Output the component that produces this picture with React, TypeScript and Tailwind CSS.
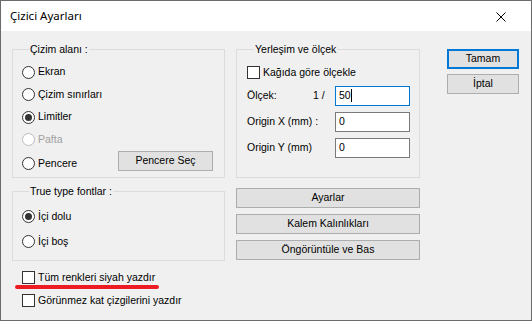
import React from "react";

// ---------------------------------------------------------------------------
// Small Win32-style controls
// ---------------------------------------------------------------------------

function Radio({ label, checked, disabled }: { label: string; checked?: boolean; disabled?: boolean }) {
  return (
    <div className="flex items-center h-[22.5px]">
      <span
        className={`w-[13px] h-[13px] rounded-full border bg-white flex items-center justify-center shrink-0 ${
          disabled ? "border-[#bcbcbc]" : "border-[#333333]"
        }`}
      >
        {checked && <span className="w-[7px] h-[7px] rounded-full bg-[#333333]" />}
      </span>
      <span className={`ml-[3px] ${disabled ? "text-[#a0a0a0]" : "text-black"}`}>{label}</span>
    </div>
  );
}

function Check({ label }: { label: string }) {
  return (
    <div className="flex items-center">
      <span className="w-[13px] h-[13px] border border-[#333333] bg-white shrink-0" />
      <span className="ml-[3px]">{label}</span>
    </div>
  );
}

function Button({ label, primary, className = "" }: { label: string; primary?: boolean; className?: string }) {
  return (
    <div
      className={`h-[20px] bg-[#e1e1e1] flex items-center justify-center ${
        primary ? "border-2 border-[#0078d7]" : "border border-[#adadad]"
      } ${className}`}
    >
      {label}
    </div>
  );
}

function Field({ value, focused }: { value: string; focused?: boolean }) {
  return (
    <div
      className={`w-[75px] h-[20px] bg-white border flex items-center pl-[3px] ${
        focused ? "border-[#0078d7]" : "border-[#7a7a7a]"
      }`}
    >
      {value}
      {focused && <span className="w-[1px] h-[13px] bg-black" />}
    </div>
  );
}

function Group({ title, className = "", children }: { title: string; className?: string; children: React.ReactNode }) {
  return (
    <fieldset className={`border border-[#dcdcdc] ${className}`}>
      <legend className="ml-[7px] px-[1px] leading-[12px]">{title}</legend>
      {children}
    </fieldset>
  );
}

// ---------------------------------------------------------------------------
// Dialog
// ---------------------------------------------------------------------------

export default function App() {
  return (
    <div className="w-[532px] h-[321px] border border-[#6b6b6b] bg-[#f0f0f0] flex flex-col font-['Liberation_Sans',Arial,sans-serif] text-[10.5px] text-black">
      {/* Title bar */}
      <div className="h-[30px] bg-white flex items-center justify-between pl-[9px] pr-[25px] shrink-0">
        <span className="font-['Noto_Sans',sans-serif] text-[11.5px]">Çizici Ayarları</span>
        <svg width="10" height="10" viewBox="0 0 10 10" className="mt-[2px]">
          <path d="M0.5 0.5L9.5 9.5M9.5 0.5L0.5 9.5" stroke="#000" strokeWidth="1" fill="none" />
        </svg>
      </div>

      {/* Body */}
      <div className="flex pl-[11px] pt-[12px]">
        {/* Left column */}
        <div className="w-[213px] flex flex-col">
          <Group title="Çizim alanı :" className="h-[135px] pl-[9px] pr-[11px] pt-[6px]">
            <Radio label="Ekran" />
            <Radio label="Çizim sınırları" />
            <Radio label="Limitler" checked />
            <Radio label="Pafta" disabled />
            <div className="flex items-center">
              <Radio label="Pencere" />
              <Button label="Pencere Seç" className="ml-auto w-[95px] mb-[5px]" />
            </div>
          </Group>

          <Group title="True type fontlar :" className="h-[76px] mt-[7px] pl-[9px] pt-[7px]">
            <div className="h-[25px] flex items-center">
              <Radio label="İçi dolu" checked />
            </div>
            <div className="h-[25px] flex items-center">
              <Radio label="İçi boş" />
            </div>
          </Group>

          <div className="mt-[5px] pl-[10px]">
            <div className="relative h-[23px] flex items-center">
              <Check label="Tüm renkleri siyah yazdır" />
              <span className="absolute left-[-7px] top-[19px] w-[144px] h-[4px] rounded-full bg-[#ed1c24]" />
            </div>
            <div className="h-[23px] flex items-center">
              <Check label="Görünmez kat çizgilerini yazdır" />
            </div>
          </div>
        </div>

        {/* Middle column */}
        <div className="w-[184px] ml-[11px] flex flex-col">
          <Group title="Yerleşim ve ölçek" className="h-[135px] pl-[10px] pt-[10px]">
            <Check label="Kağıda göre ölçekle" />
            <div className="flex flex-col gap-[6px] mt-[5px]">
              <div className="flex items-center h-[20px]">
                <span className="w-[66px]">Ölçek:</span>
                <span className="w-[22px]">1 /</span>
                <Field value="50" focused />
              </div>
              <div className="flex items-center h-[20px]">
                <span className="w-[88px]">Origin X (mm) :</span>
                <Field value="0" />
              </div>
              <div className="flex items-center h-[20px]">
                <span className="w-[88px]">Origin Y (mm)</span>
                <Field value="0" />
              </div>
            </div>
          </Group>

          <div className="flex flex-col gap-[6px] mt-[10px]">
            <Button label="Ayarlar" />
            <Button label="Kalem Kalınlıkları" />
            <Button label="Öngörüntüle ve Bas" />
          </div>
        </div>

        {/* Right column */}
        <div className="w-[72px] ml-[27px] mt-[6px] flex flex-col gap-[5px]">
          <Button label="Tamam" primary />
          <Button label="İptal" />
        </div>
      </div>
    </div>
  );
}
